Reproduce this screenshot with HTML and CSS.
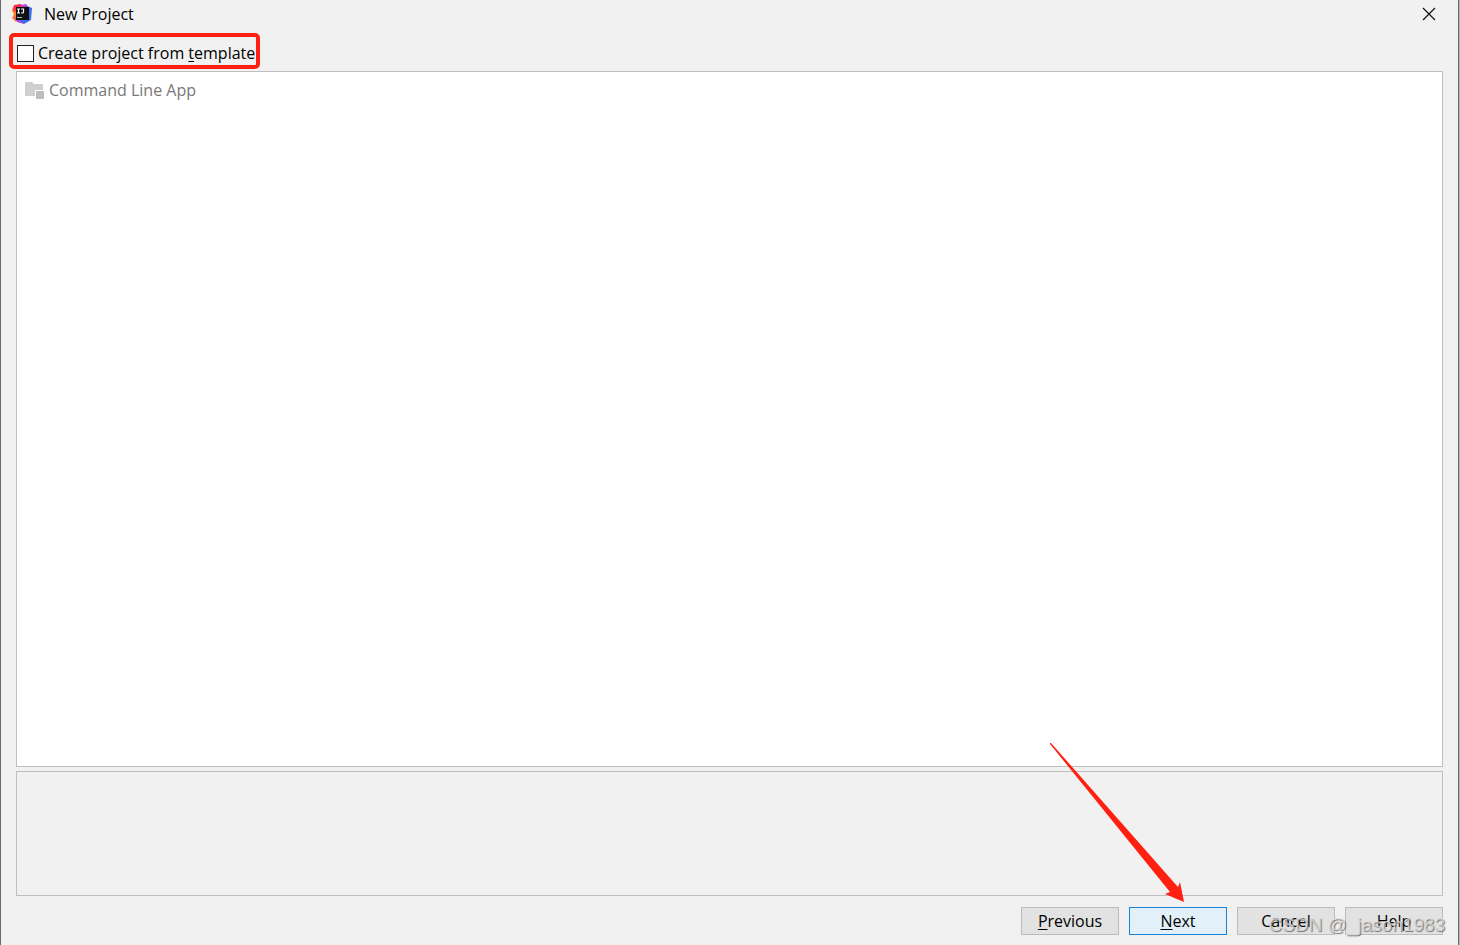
FILE: index.html
```html
<!DOCTYPE html>
<html lang="en">
<head>
<meta charset="utf-8">
<title>New Project</title>
<link rel="stylesheet" href="styles.css">
</head>
<body>
<main class="dialog">
  <header class="titlebar">
    <svg class="logo" viewBox="0 0 20 20" aria-hidden="true">
      <path fill="#fc801d" d="M1 3 8 0 6 10 4 18 0 14 2 10 0 7z"/>
      <path fill="#fe2857" d="M2 1 9 0 12 4 5 8 1 6z"/>
      <path fill="#3c6cf0" d="M13 1 20 4 19 16 12 20 7 17 12 9z"/>
      <path fill="#a44bd8" d="M9 1 14 0 17 4 14 6zM2 13 6 14 12 20 5 18z"/>
      <path fill="#111" d="M4 3h13v13H4z"/>
      <path fill="none" stroke="#fff" stroke-width="1.2" d="M5 5h3M6.500 5v4M5 9h3M9 5h2.500v3q0 1-1 1H9"/>
      <path fill="#bbb" d="M5 13h5v1H5z"/>
    </svg>
    <h1 class="title">New Project</h1>
    <button class="close" type="button" aria-label="Close">
      <svg class="close-icon" viewBox="0 0 12 12" aria-hidden="true"><path d="M0 0 12 12M12 0 0 12" fill="none" stroke="#111" stroke-width="1.2"/></svg>
    </button>
  </header>
  <div class="option-row">
    <label class="option">
      <input class="checkbox" type="checkbox">
      <span>Create project from <u class="key">t</u>emplate</span>
      <span class="highlight"></span>
    </label>
  </div>
  <section class="templates">
    <div class="template">
      <svg class="folder" viewBox="0 0 20 18" aria-hidden="true">
        <path fill="#cfcfcf" d="M0 1h7l2 2h9v6h-8v6H0z"/>
        <path fill="#bdbdbd" d="M11 10h8v8h-8z"/>
      </svg>
      <span>Command Line App</span>
    </div>
  </section>
  <section class="description"></section>
  <footer class="actions">
    <button class="button" type="button"><u class="key">P</u>revious</button>
    <div class="next-wrap">
      <button class="button primary" type="button"><u class="key">N</u>ext</button>
      <svg class="arrow" viewBox="0 0 134 159" aria-hidden="true"><path fill="#ff2011" d="M0 0 1 0 128 144 130 139 134 159 115 151 120 149 0 1z"/></svg>
    </div>
    <button class="button" type="button">Cancel</button>
    <button class="button" type="button">Help</button>
    <span class="watermark">CSDN @_jason1983</span>
  </footer>
</main>
</body>
</html>
```
FILE: styles.css
```css
* { box-sizing: border-box; }
body {
  margin: 0;
  background: #b4b4b4;
  color: #000;
  font: 16px/22px "Open Sans", "Noto Sans", sans-serif;
}
.dialog {
  display: flex;
  flex-direction: column;
  min-height: 100vh;
  margin-right: 1px;
  padding: 0 15px 10px;
  border: solid #6b6b6b;
  border-width: 0 1px;
  background: #f1f1f1;
}
.titlebar {
  display: flex;
  align-items: center;
  height: 28px;
  margin-left: -4px;
}
.logo { width: 20px; height: 20px; }
.title { flex: 1; margin: 0 0 0 12px; font-size: 16px; font-weight: 400; }
.close {
  display: grid;
  place-items: center;
  width: 28px;
  height: 28px;
  padding: 0;
  border: 0;
  background: none;
}
.close-icon { width: 12px; height: 12px; overflow: visible; }
.option-row { display: flex; padding: 14px 0 7px; }
.option {
  position: relative;
  display: flex;
  align-items: center;
  gap: 4px;
  padding-left: 1px;
}
.checkbox {
  appearance: none;
  width: 17px;
  height: 17px;
  margin: 0;
  border: 1px solid #222;
  background: #fff;
}
.highlight {
  position: absolute;
  inset: -9px -5px -5px -7px;
  border: 4px solid #ff2011;
  border-radius: 5px;
  pointer-events: none;
}
.key { text-decoration: underline; text-underline-offset: 2px; }
.templates {
  flex: 1;
  padding: 7px 8px;
  border: 1px solid #bfbfbf;
  background: #fff;
}
.template { display: flex; align-items: center; gap: 4px; color: #787878; }
.folder { width: 20px; height: 18px; }
.description { height: 125px; margin-top: 4px; border: 1px solid #bfbfbf; }
.actions {
  position: relative;
  display: flex;
  justify-content: flex-end;
  gap: 10px;
  padding-top: 11px;
}
.button {
  width: 98px;
  height: 28px;
  padding: 0;
  border: 1px solid #bcbcbc;
  background: #e2e2e2;
  color: #000;
  font: inherit;
  line-height: 24px;
}
.primary { border-color: #1883d7; background: #e2f0fa; }
.next-wrap { position: relative; }
.arrow {
  position: absolute;
  right: 43px;
  bottom: 33px;
  width: 134px;
  height: 159px;
  pointer-events: none;
}
.watermark {
  position: absolute;
  right: -2px;
  bottom: -2px;
  color: rgba(225, 225, 225, .75);
  font: 19px/24px "Liberation Sans", sans-serif;
  text-shadow: 1px 1px 1px rgba(90, 90, 90, .8);
  white-space: nowrap;
  pointer-events: none;
}
```
